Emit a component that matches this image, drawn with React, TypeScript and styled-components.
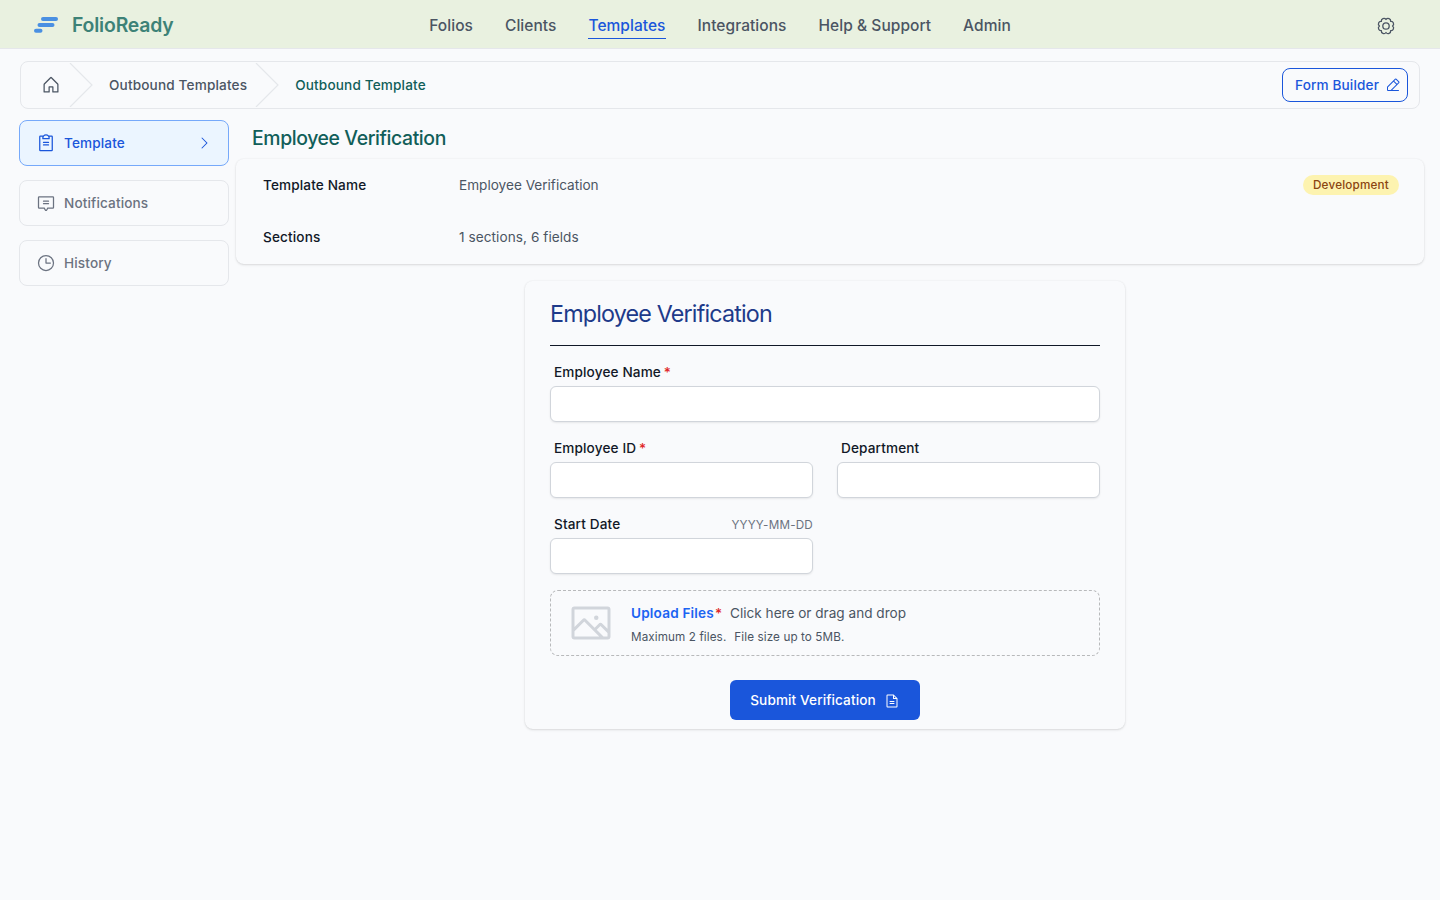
import React from 'react';
import styled, { createGlobalStyle, css } from 'styled-components';
import {
  PiCaretRight,
  PiChatCenteredText,
  PiClipboardText,
  PiClock,
  PiFileText,
  PiHouse,
  PiImage,
  PiPencilSimpleLine,
} from 'react-icons/pi';

const GlobalStyle = createGlobalStyle`
  *, *::before, *::after { box-sizing: border-box; }
  body {
    margin: 0;
    background: #f9fafc;
    color: #111827;
    font-family: Inter, "Liberation Sans", sans-serif;
    font-size: 13.6px;
    line-height: 20px;
  }
  svg { display: block; flex: none; }
`;

const mediumText = css`
  font-weight: 500;
  letter-spacing: 0.13px;
`;

const smallText = css`
  font-size: 11.7px;
  letter-spacing: 0.1px;
`;

const Page = styled.div`
  min-height: 900px;
`;

const Header = styled.header`
  display: grid;
  grid-template-columns: 1fr auto 1fr;
  align-items: center;
  height: 49px;
  padding: 0 34px;
  background: #e9f1e0;
  border-bottom: 1px solid #e5e7eb;
`;

const Brand = styled.div`
  display: flex;
  align-items: center;
  gap: 14px;
  padding-top: 2px;
  color: #3d8277;
  font-size: 19.4px;
  font-weight: 600;
  line-height: 28px;
  letter-spacing: -0.18px;
`;

const Nav = styled.nav`
  display: flex;
  gap: 32px;
  padding-top: 3px;
`;

const NavLink = styled.a<{ $active?: boolean }>`
  padding-top: 1px;
  border-bottom: 1px solid ${(p) => (p.$active ? '#1a56db' : 'transparent')};
  color: ${(p) => (p.$active ? '#1a56db' : '#4b5563')};
  font-size: 15.5px;
  font-weight: 500;
  line-height: 24px;
  letter-spacing: 0.05px;
`;

const Settings = styled.div`
  justify-self: end;
  margin-right: 10px;
  padding-top: 3px;
  color: #4b5563;
`;

const Breadcrumb = styled.div`
  display: flex;
  align-items: center;
  height: 48px;
  margin: 12px 20px 0;
  padding: 0 11px 0 20px;
  border: 1px solid #e5e7eb;
  border-radius: 8px;
  color: #4b5563;
`;

const Crumb = styled.span<{ $current?: boolean }>`
  ${mediumText}
  letter-spacing: 0.15px;
  color: ${(p) => (p.$current ? '#115e59' : '#4b5563')};
`;

const Separator = styled.svg`
  width: 24px;
  height: 44px;
  margin: 0 16px 0 8px;
`;

const BuilderButton = styled.button`
  display: flex;
  align-items: center;
  width: 126px;
  height: 34px;
  margin-left: auto;
  padding: 0 6px 0 12px;
  border: 1px solid #1a56db;
  border-radius: 8px;
  background: transparent;
  color: #1a56db;
  font: inherit;
  white-space: nowrap;
  ${mediumText}
  svg { margin-left: auto; }
`;

const Body = styled.div`
  display: flex;
  gap: 7px;
  padding: 11px 16px 0 19px;
`;

const Sidebar = styled.aside`
  display: flex;
  flex-direction: column;
  gap: 14px;
  width: 210px;
`;

const SideItem = styled.div<{ $active?: boolean }>`
  display: flex;
  align-items: center;
  gap: 8px;
  height: 46px;
  padding: 0 16px;
  border: 1px solid #e5e7eb;
  border-radius: 8px;
  color: #6b7280;
  ${mediumText}
  ${(p) =>
    p.$active &&
    css`
      border-color: #76a9fa;
      background: #ebf5ff;
      color: #1a56db;
    `}
  svg:nth-of-type(2) { margin-left: auto; }
`;

const Main = styled.main`
  flex: 1;
`;

const PageTitle = styled.h1`
  margin: 4px 0 0 16px;
  color: #115e59;
  font-size: 19.4px;
  font-weight: 500;
  line-height: 28px;
  letter-spacing: -0.39px;
`;

const cardFrame = css`
  border-radius: 8px;
  box-shadow: 0 1px 3px 0 rgba(0, 0, 0, 0.1), 0 1px 2px -1px rgba(0, 0, 0, 0.1), 0 0 2px 0 rgba(0, 0, 0, 0.06);
`;

const Summary = styled.section`
  ${cardFrame}
  height: 105px;
  margin-top: 7px;
  padding: 16px 25px 0 27px;
`;

const SummaryRow = styled.div`
  display: grid;
  grid-template-columns: 196px 1fr auto;
  height: 52px;
  color: #4b5563;
`;

const Term = styled.span`
  ${mediumText}
  color: #111827;
`;

const SectionCount = styled.span`
  letter-spacing: 0.07px;
`;

const Badge = styled.span`
  height: 20px;
  padding: 0 10px;
  border-radius: 10px;
  background: #fdf3b0;
  color: #8a4510;
  font-size: 11.7px;
  font-weight: 500;
  letter-spacing: 0.19px;
`;

const FormCard = styled.form`
  ${cardFrame}
  width: 600px;
  height: 448px;
  margin: 17px 0 0 289px;
  padding: 17px 25px 0;
`;

const FormTitle = styled.h2`
  height: 48px;
  margin: 0 0 16px;
  border-bottom: 1px solid #111827;
  color: #1e3a8a;
  font-size: 23.3px;
  font-weight: 400;
  line-height: 32px;
  letter-spacing: -0.83px;
`;

const FieldGrid = styled.div`
  display: grid;
  grid-template-columns: 1fr 1fr;
  gap: 16px 24px;
`;

const Field = styled.label<{ $wide?: boolean }>`
  grid-column: ${(p) => (p.$wide ? '1 / -1' : 'auto')};
  display: flex;
  flex-direction: column;
  gap: 4px;
`;

const LabelRow = styled.span`
  display: flex;
  justify-content: space-between;
  height: 20px;
  padding-left: 4px;
  ${mediumText}
`;

const Required = styled.span`
  margin-left: -1px;
  color: #e02424;
  font-weight: 500;
`;

const Hint = styled.span`
  ${smallText}
  padding-top: 1px;
  color: #6b7280;
  font-weight: 400;
  letter-spacing: 0.2px;
`;

const Input = styled.input`
  width: 100%;
  height: 36px;
  border: 1px solid #d1d5db;
  border-radius: 6px;
  background: #fff;
  box-shadow: 0 1px 2px 0 rgba(0, 0, 0, 0.08);
`;

const Upload = styled.div`
  display: flex;
  align-items: center;
  gap: 16px;
  height: 66px;
  margin-top: 16px;
  padding: 0 16px;
  border: 1px dashed #b8b9bb;
  border-radius: 8px;
  color: #4b5563;
  svg { color: #d1d5db; }
`;

const UploadLine = styled.div`
  height: 24px;
  padding-top: 3px;
`;

const UploadLink = styled.span`
  margin-right: 2px;
  color: #1c64f2;
  font-weight: 600;
  letter-spacing: 0.18px;
`;

const UploadPrompt = styled.span`
  margin-left: 8px;
`;

const UploadNote = styled.div`
  ${smallText}
  display: flex;
  gap: 8px;
  height: 22px;
  padding-top: 3px;
`;

const Submit = styled.button`
  display: flex;
  align-items: center;
  justify-content: center;
  gap: 8px;
  width: 190px;
  height: 40px;
  margin: 24px auto 0;
  border: 0;
  border-radius: 6px;
  background: #1a56db;
  color: #fff;
  font: inherit;
  ${mediumText}
  letter-spacing: 0.1px;
  svg { margin-top: 2px; }
`;

const Logo = () => (
  <svg width="24" height="16" viewBox="0 0 24 16" stroke="#4a90e2" strokeWidth="4" strokeLinecap="round">
    <path d="M9 2H22M5.5 8H18.500M2 13.700H6.500" />
  </svg>
);

/* Eight rounded lobes around a hub, one arc per lobe. */
const GearIcon = () => (
  <svg width="20" height="20" viewBox="-10 -10 20 20" fill="none" stroke="currentColor" strokeWidth="1.3" strokeLinejoin="round">
    <circle r="3.2" />
    <path d="M0 -6.500A2.550 2.550 0 0 1 4.600 -4.600A2.550 2.550 0 0 1 6.500 0A2.550 2.550 0 0 1 4.600 4.600A2.550 2.550 0 0 1 0 6.500A2.550 2.550 0 0 1 -4.600 4.600A2.550 2.550 0 0 1 -6.500 0A2.550 2.550 0 0 1 -4.600 -4.600A2.550 2.550 0 0 1 0 -6.500Z" />
  </svg>
);

const Chevron = () => (
  <Separator viewBox="0 0 24 44" fill="none" stroke="#e5e7eb" strokeWidth="1.2">
    <path d="M1 0L23 22L1 44" />
  </Separator>
);

const navItems = ['Folios', 'Clients', 'Templates', 'Integrations', 'Help & Support', 'Admin'];

type TextFieldProps = { label: string; required?: boolean; hint?: string; wide?: boolean };

const TextField = ({ label, required, hint, wide }: TextFieldProps) => (
  <Field $wide={wide}>
    <LabelRow>
      <span>
        {label} {required && <Required>*</Required>}
      </span>
      {hint && <Hint>{hint}</Hint>}
    </LabelRow>
    <Input />
  </Field>
);

export default function App() {
  return (
    <Page>
      <GlobalStyle />
      <Header>
        <Brand>
          <Logo />
          FolioReady
        </Brand>
        <Nav>
          {navItems.map((item) => (
            <NavLink key={item} $active={item === 'Templates'}>
              {item}
            </NavLink>
          ))}
        </Nav>
        <Settings>
          <GearIcon />
        </Settings>
      </Header>
      <Breadcrumb>
        <PiHouse size={20} />
        <Chevron />
        <Crumb>Outbound Templates</Crumb>
        <Chevron />
        <Crumb $current>Outbound Template</Crumb>
        <BuilderButton>
          Form Builder
          <PiPencilSimpleLine size={16} />
        </BuilderButton>
      </Breadcrumb>
      <Body>
        <Sidebar>
          <SideItem $active>
            <PiClipboardText size={20} />
            Template
            <PiCaretRight size={16} />
          </SideItem>
          <SideItem>
            <PiChatCenteredText size={20} />
            Notifications
          </SideItem>
          <SideItem>
            <PiClock size={20} />
            History
          </SideItem>
        </Sidebar>
        <Main>
          <PageTitle>Employee Verification</PageTitle>
          <Summary>
            <SummaryRow>
              <Term>Template Name</Term>
              <span>Employee Verification</span>
              <Badge>Development</Badge>
            </SummaryRow>
            <SummaryRow>
              <Term>Sections</Term>
              <SectionCount>1 sections, 6 fields</SectionCount>
            </SummaryRow>
          </Summary>
          <FormCard>
            <FormTitle>Employee Verification</FormTitle>
            <FieldGrid>
              <TextField label="Employee Name" required wide />
              <TextField label="Employee ID" required />
              <TextField label="Department" />
              <TextField label="Start Date" hint="YYYY-MM-DD" />
            </FieldGrid>
            <Upload>
              <PiImage size={48} />
              <div>
                <UploadLine>
                  <UploadLink>Upload Files</UploadLink>
                  <Required>*</Required>
                  <UploadPrompt>Click here or drag and drop</UploadPrompt>
                </UploadLine>
                <UploadNote>
                  <span>Maximum 2 files.</span>
                  <span>File size up to 5MB.</span>
                </UploadNote>
              </div>
            </Upload>
            <Submit type="button">
              Submit Verification
              <PiFileText size={16} />
            </Submit>
          </FormCard>
        </Main>
      </Body>
    </Page>
  );
}
